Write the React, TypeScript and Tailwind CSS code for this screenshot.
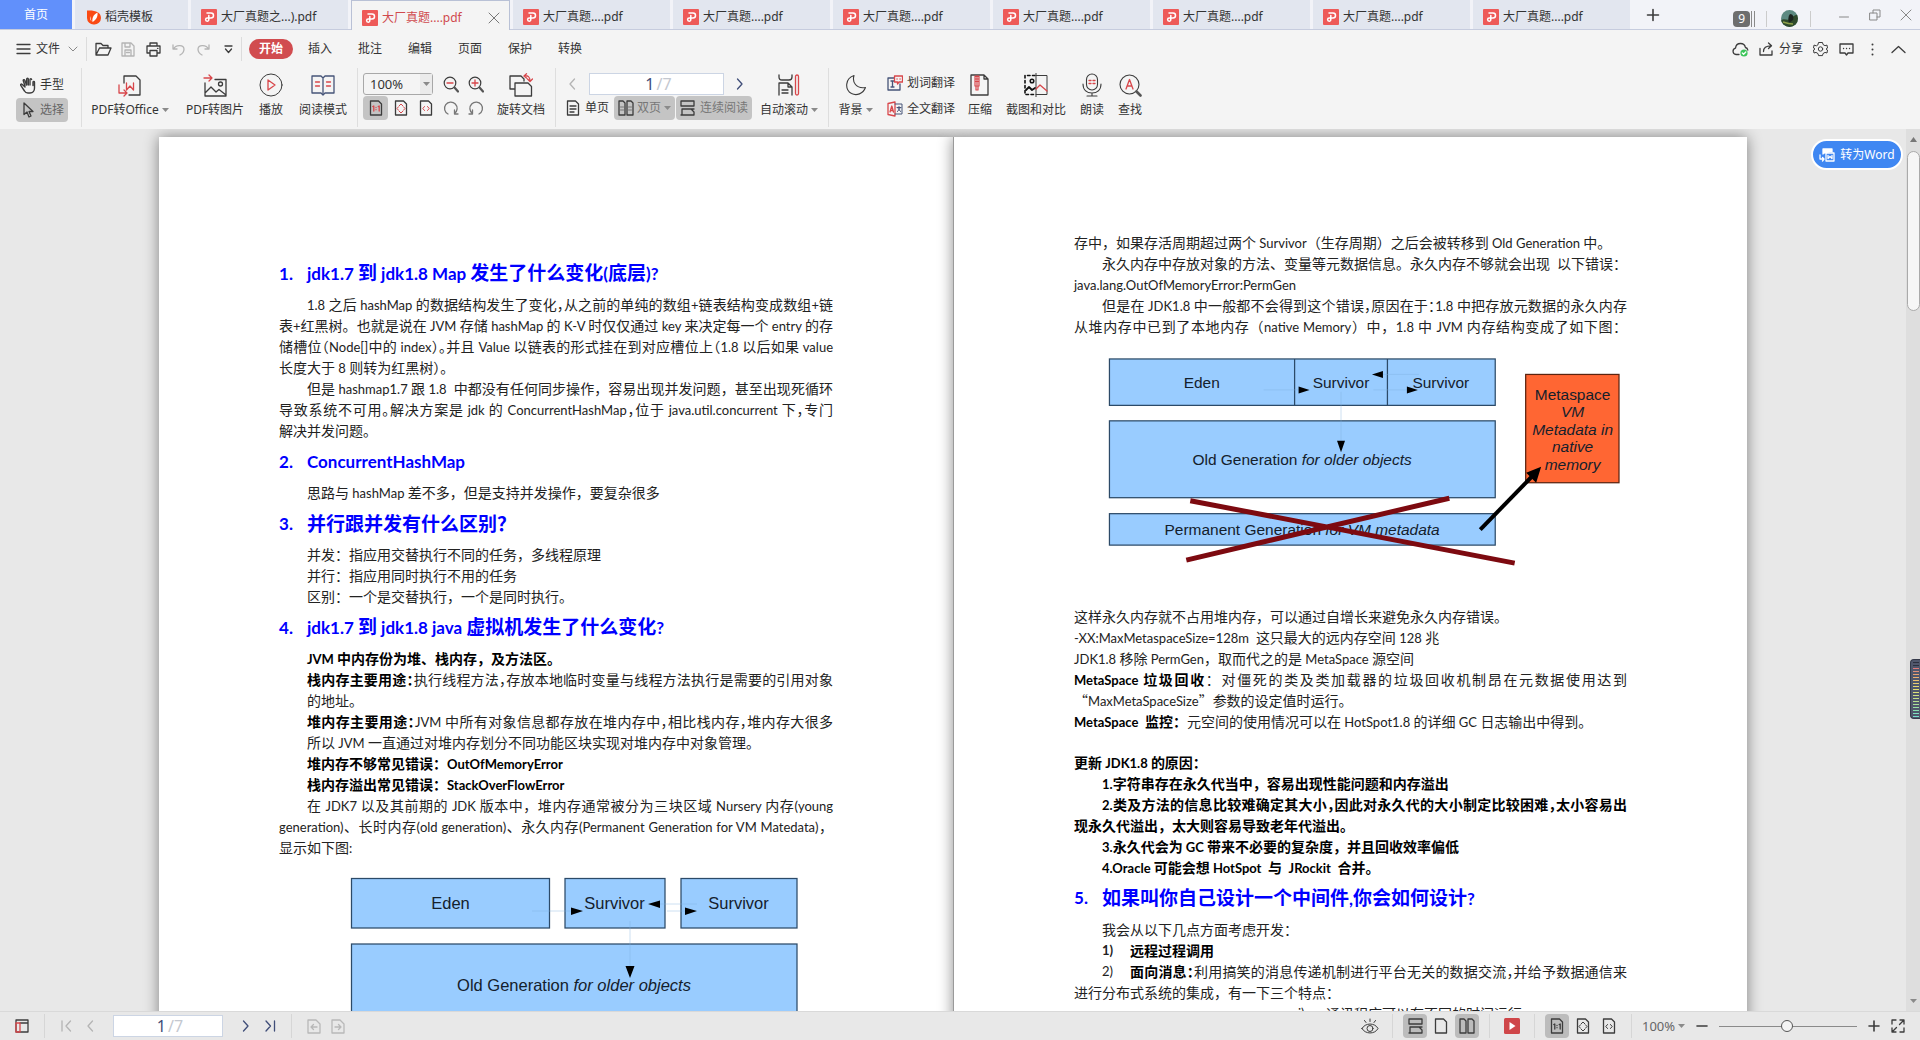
import React from 'react';
import clsx from 'clsx';

type Children = { children?: React.ReactNode };

/* ---------- icons ---------- */

const Icon = ({ w = 16, h = 16, color = '#3c3c3c', children }: Children & { w?: number; h?: number; color?: string }) => (
  <svg
    width={w}
    height={h}
    viewBox={`0 0 ${w} ${h}`}
    fill="none"
    stroke={color}
    strokeWidth="1.3"
    strokeLinecap="round"
    strokeLinejoin="round"
    aria-hidden="true"
    className="shrink-0"
  >
    {children}
  </svg>
);

const RED = '#d8474b';
const MUTED = '#b4b4b4';

const PdfLogo = () => (
  <svg width="16" height="16" viewBox="0 0 16 16" aria-hidden="true" className="shrink-0">
    <rect width="16" height="16" rx="1" fill="#ee5a58" />
    <path
      d="M6 4h4a2 2 0 0 1 0 5H6.2a1.6 1.6 0 1 0 1.6 1.6V6.5"
      fill="none"
      stroke="#fff"
      strokeWidth="1.5"
      strokeLinecap="round"
    />
  </svg>
);

const DocerLogo = () => (
  <svg width="14" height="16" viewBox="0 0 14 16" aria-hidden="true" className="shrink-0">
    <path d="M0 1.5C8 1 14 3 14 9a6.6 6.6 0 0 1-7 6.5A6.6 6.6 0 0 1 0 9z" fill="#fa4a14" />
    <path d="M10.5 3.500C6 6 5 9 5.500 13 9 11 11 8 10.500 3.500zM3 7c-.3 2 .3 4 1.500 5.500" fill="#fff" />
  </svg>
);

const Caret = () => (
  <svg width="7" height="4" viewBox="0 0 7 4" aria-hidden="true" className="shrink-0">
    <path d="M0 0h7L3.500 4z" fill="#8a8a8a" />
  </svg>
);

const ChevronLeft = ({ color = MUTED }) => (
  <Icon w={8} h={14} color={color}>
    <path d="M6.500 2 2 7l4.500 5" />
  </Icon>
);

const ChevronRight = ({ color = '#3f4d78' }) => (
  <Icon w={8} h={14} color={color}>
    <path d="M1.500 2 6 7l-4.500 5" />
  </Icon>
);

const sheet = 'M1.500 1h8l3 3v11h-11z';

const ActualSize = ({ accent = RED }) => (
  <Icon w={14} h={16}>
    <path d={sheet} />
    <path d="M3.800 6.500 4.800 6v5M9.200 6.500l1-.5v5M7 7.500v.1M7 9.600v.1" stroke={accent} />
  </Icon>
);

const FitPage = ({ accent = RED }) => (
  <Icon w={14} h={16}>
    <path d={sheet} />
    <path d="M5 6l2-2 2 2M5 11l2 2 2-2M4.300 7 3 8.500l1.300 1.500M9.700 7 11 8.500 9.700 10" stroke={accent} strokeWidth="1" />
  </Icon>
);

const FitWidth = ({ accent = RED }) => (
  <Icon w={14} h={16}>
    <path d={sheet} />
    <path d="M5.500 6.500 3.800 8.500l1.700 2M8.500 6.500l1.700 2-1.700 2" stroke={accent} strokeWidth="1" />
  </Icon>
);

const TwoPages = () => (
  <Icon w={16} h={16}>
    <path d="M1 1h4l2 2v12H1zM9 1h4l2 2v12H9z" />
    <path d="M2.500 7h3M2.500 10h3M10.500 7h3M10.500 10h3" strokeWidth="1" stroke="#777" />
  </Icon>
);

const Continuous = () => (
  <Icon w={15} h={16}>
    <path d="M1 1h13v5H1zM2 15V9h12M1 15h13v-3l-3-3" />
  </Icon>
);

/* ---------- window chrome ---------- */

const tabs = [
  { name: '大厂真题之...).pdf' },
  { name: '大厂真题....pdf', active: true },
  { name: '大厂真题....pdf' },
  { name: '大厂真题....pdf' },
  { name: '大厂真题....pdf' },
  { name: '大厂真题....pdf' },
  { name: '大厂真题....pdf' },
  { name: '大厂真题....pdf' },
  { name: '大厂真题....pdf' },
];

const TabBar = () => (
  <header className="flex h-[30px] shrink-0 border-b border-[#c6ccde] bg-[#f2f3f8]">
    <button className="w-[72px] bg-[#6190fb] text-white">首页</button>
    <button className="ml-[3px] flex w-[113px] items-center gap-1 bg-[#e2e6ef] pt-1 pl-3">
      <DocerLogo />
      稻壳模板
    </button>
    {tabs.map((tab, i) =>
      tab.active ? (
        <div
          key={i}
          className="-mb-px ml-[3px] flex w-[159px] items-center border border-b-0 border-[#b9c1d6] bg-[#f4f4f4] pt-1 pl-[10px]"
        >
          <button className="flex items-center gap-1 text-[#d04a4e]">
            <PdfLogo />
            {tab.name}
          </button>
          <button aria-label="关闭标签" className="mr-[9px] ml-auto">
            <Icon w={12} h={12} color="#777">
              <path d="M1 1l10 10M11 1 1 11" strokeWidth="1" />
            </Icon>
          </button>
        </div>
      ) : (
        <button key={i} className="ml-[3px] flex w-[157px] items-center gap-1 bg-[#e2e6ef] pt-1 pl-[10px]">
          <PdfLogo />
          {tab.name}
        </button>
      ),
    )}
    <button aria-label="新建标签" className="ml-3 px-1">
      <Icon w={14} h={14}>
        <path d="M7 1.500v11M1.500 7h11" strokeWidth="1.600" />
      </Icon>
    </button>
    <div className="ml-auto flex items-center">
      <div className="flex items-center pt-2">
        <button className="flex h-4 items-center rounded-sm bg-[#6e6e6e] px-[5px] text-white">9</button>
        <span className="ml-px h-4 w-1 border-x border-[#8a8a8a]" />
        <span className="ml-[11px] h-4 w-px bg-[#ccc]" />
        <button aria-label="账户" className="ml-[14px] size-[17px] overflow-hidden rounded-full">
          <svg width="17" height="17" viewBox="0 0 17 17" aria-hidden="true">
            <rect width="17" height="17" fill="#5d8a82" />
            <path d="M0 10c4-2 6 1 9-1s5-5 8-4v12H0z" fill="#2f4a2c" />
            <path d="M9 4c3 0 4 3 3 6l-4 3c-1-3-1-7 1-9z" fill="#1c2420" />
            <path d="M2 12c3 1 6 2 10 2" stroke="#8ea04a" strokeWidth="1.500" fill="none" />
          </svg>
        </button>
        <span className="ml-3 h-4 w-px bg-[#ccc]" />
      </div>
      <button aria-label="最小化" className="ml-[27px]">
        <Icon w={12} h={12} color="#888">
          <path d="M1.500 8h9" strokeWidth="1" />
        </Icon>
      </button>
      <button aria-label="还原" className="ml-[19px]">
        <Icon w={12} h={12} color="#888">
          <path d="M1 4h7v7H1zM4 4V1h7v7H8" strokeWidth="1" />
        </Icon>
      </button>
      <button aria-label="关闭" className="mr-2 ml-[19px]">
        <Icon w={12} h={12} color="#888">
          <path d="M1 1l10 10M11 1 1 11" strokeWidth="1" />
        </Icon>
      </button>
    </div>
  </header>
);

const menus = ['插入', '批注', '编辑', '页面', '保护', '转换'];

const MenuBar = () => (
  <nav className="flex h-[38px] shrink-0 items-center bg-[#f4f4f4] pl-4">
    <button className="flex items-center gap-[5px]">
      <Icon w={15} h={12}>
        <path d="M1 1.500h13M1 6h13M1 10.500h13" />
      </Icon>
      文件
      <span className="ml-[3px]">
        <Icon w={10} h={6} color="#888">
          <path d="M1 1l4 4 4-4" strokeWidth="1" />
        </Icon>
      </span>
    </button>
    <span className="ml-2 h-6 w-px bg-[#dcdcdc]" />
    <button aria-label="打开" className="ml-2">
      <Icon w={17} h={14}>
        <path d="M1 13V1.500h5l2 2h5V6M1 13 4.500 6H16l-3 7z" />
      </Icon>
    </button>
    <button aria-label="保存" className="ml-[9px]">
      <Icon w={14} h={15} color={MUTED}>
        <path d="M1 1h9l3 3v10H1zM4 1v4h5V1M4 14V8h6v6M5.500 10.500h3" />
      </Icon>
    </button>
    <button aria-label="打印" className="ml-[11px]">
      <Icon w={15} h={15}>
        <path d="M4 4V1h7v3M4 11H1V4h13v7h-3M4 8.500h7V14H4zM11.500 6.300h.5" />
      </Icon>
    </button>
    <button aria-label="撤销" className="ml-[11px]">
      <Icon w={13} h={13} color={MUTED}>
        <path d="M1 2v4h4M1.500 6c2-4 10-5 10.500 0 0 3-2 5-4 6" />
      </Icon>
    </button>
    <button aria-label="恢复" className="ml-3">
      <Icon w={13} h={13} color={MUTED}>
        <path d="M12 2v4H8M11.500 6C9.500 2 1.500 1 1 6c0 3 2 5 4 6" />
      </Icon>
    </button>
    <button aria-label="自定义快速访问" className="ml-[14px]">
      <Icon w={9} h={9}>
        <path d="M1 1h7M1.500 4l3 3.500L7.500 4" />
      </Icon>
    </button>
    <span className="ml-2 h-6 w-px bg-[#dcdcdc]" />
    <button className="ml-[7px] h-5 w-11 rounded-full bg-[#d14c4f] font-bold text-white">开始</button>
    <div className="ml-[15px] flex gap-[26px]">
      {menus.map((m) => (
        <button key={m}>{m}</button>
      ))}
    </div>
    <div className="mr-[14px] ml-auto flex items-center">
      <button aria-label="云同步">
        <Icon w={17} h={15}>
          <path d="M7 12.500H4a3.200 3.200 0 0 1-.5-6.300C3.800 3.300 6 1.500 8.500 1.500S13 3.300 13.400 5.500A3 3 0 0 1 15.800 8" />
          <circle cx="12" cy="11" r="3.600" fill="#3cc45a" stroke="none" />
          <path d="M10.300 11l1.300 1.300 2.200-2.300" stroke="#fff" />
        </Icon>
      </button>
      <button className="ml-[10px] flex items-center gap-[5px]">
        <Icon w={15} h={14}>
          <path d="M1 6.500V13h12V9M4.500 9.500C4.500 6 7 3.800 12 3.800M9.500 1 12.500 3.800 9.500 6.600" />
        </Icon>
        分享
      </button>
      <button aria-label="设置" className="ml-[10px]">
        <Icon w={15} h={16}>
          <path
            d="M5 3.500 5.500 1.500h4l.5 2 2 1.200 2-.6.500 3L13 8l1.500 1-.5 3-2-.6-2 1.200-.5 2h-4l-.5-2-2-1.200-2 .6-.5-3L2 8 .5 7 1 4.100l2 .6z"
            strokeWidth="1"
          />
          <circle cx="7.500" cy="8" r="2.200" strokeWidth="1" />
        </Icon>
      </button>
      <button aria-label="反馈" className="ml-[11px]">
        <Icon w={15} h={13}>
          <path d="M1 1h13v9H9l-1.500 2L6 10H1zM4.500 5.500h.1M7.500 5.500h.1M10.500 5.500h.1" />
        </Icon>
      </button>
      <button aria-label="更多" className="ml-[17px]">
        <Icon w={3} h={13}>
          <path d="M1.500 1.500v.1M1.500 6.500v.1M1.500 11.500v.1" strokeWidth="2" />
        </Icon>
      </button>
      <button aria-label="收起功能区" className="ml-[17px]">
        <Icon w={15} h={9}>
          <path d="M1 7.500 7.500 1.500 14 7.500" />
        </Icon>
      </button>
    </div>
  </nav>
);

/* ---------- ribbon ---------- */

const Tool = ({ label, caret, className, children }: Children & { label: string; caret?: boolean; className?: string }) => (
  <button className={clsx('flex shrink-0 flex-col items-center gap-[3px] whitespace-nowrap', className)}>
    <span className="flex h-6 items-center">{children}</span>
    <span className="flex h-5 items-center gap-[3px]">
      {label}
      {caret && <Caret />}
    </span>
  </button>
);

const Divider = ({ className }: { className?: string }) => (
  <span className={clsx('-mt-[5px] h-[59px] w-px shrink-0 bg-[#dedede]', className)} />
);

const SmallTool = ({ label, children }: Children & { label: string }) => (
  <button aria-label={label} className="flex h-6 w-[25px] items-center justify-center">
    {children}
  </button>
);

const Magnifier = ({ plus }: { plus?: boolean }) => (
  <Icon w={16} h={17}>
    <circle cx="7" cy="7" r="5.800" strokeWidth="1.200" />
    <path d="M11.500 11.500l3.500 4" strokeWidth="2.200" stroke="#555" />
    <path d={plus ? 'M4 7h6M7 4v6' : 'M4 7h6'} stroke={RED} />
  </Icon>
);

const PageBox = ({ className }: { className?: string }) => (
  <label
    className={clsx('flex h-[22px] items-center border border-[#ccd5e4] bg-white text-base leading-5', className)}
  >
    <input aria-label="页码" defaultValue="1" className="w-1/2 bg-transparent pr-0.5 text-right text-[#3f4d78] outline-none" />
    <span className="w-1/2 text-[#c4c8d0]">/7</span>
  </label>
);

const Ribbon = () => (
  <section className="flex h-[61px] shrink-0 items-start bg-[#f4f4f4] pt-[5px] pl-4">
    <div className="flex w-[52px] shrink-0 flex-col gap-px">
      <button className="flex h-6 items-center gap-1 pl-1">
        <Icon w={16} h={17}>
          <path
            d="M5 10 2 7.300c-.8-.8-1.700.2-1.200 1L4.500 14c.6 1.200 1.700 2 3.500 2h2c3 0 4.500-2 4.500-5V5.200c0-1-1.500-1-1.500 0v3.300M5 9 3.300 3.700c-.3-1 1-1.500 1.500-.5L6.500 8M6.700 8V2c0-1.100 1.600-1.100 1.600 0v6M10 8V2.500c0-1.100 1.600-1.100 1.600 0"
            strokeWidth="1.400"
          />
        </Icon>
        <span className="whitespace-nowrap">手型</span>
      </button>
      <button className="flex h-6 items-center gap-1.5 rounded bg-[#c4c4c4] pl-[7px] text-[#666]">
        <Icon w={11} h={16}>
          <path d="M1 1v11.500l3-2.500 2 5 2-1-2-4.500h4z" />
        </Icon>
        <span className="whitespace-nowrap">选择</span>
      </button>
    </div>
    <Divider className="ml-[13px]" />
    <Tool label="PDF转Office" caret className="ml-[9px] w-[78px]">
      <Icon w={24} h={23}>
        <path d="M6 9V2h12l4 4v15H11" />
        <path d="M8.500 9v7l3.500-4 3.500 4V9M1 11v8h8M6 16l3 3-3 3" stroke={RED} />
      </Icon>
    </Tool>
    <Tool label="PDF转图片" className="ml-4 w-[60px]">
      <Icon w={24} h={23}>
        <path d="M2 9v13h21V5.500H12M2 19l6-6 5 5 3-2.500 7 5.500" />
        <circle cx="17.500" cy="10" r="2" />
        <path d="M1 4h8M6 1l3 3-3 3" stroke={RED} />
      </Icon>
    </Tool>
    <Tool label="播放" className="ml-[14px] w-6">
      <Icon w={24} h={24}>
        <circle cx="12" cy="12" r="11" strokeWidth="1" />
        <path d="M9 7v10l7-5z" stroke={RED} />
      </Icon>
    </Tool>
    <Tool label="阅读模式" className="ml-4 w-12">
      <Icon w={24} h={22} color="#465478">
        <path d="M12 4v15M12 4l-2-2H1v17h9l2 2 2-2h9V2h-9z" />
        <path d="M4.500 8h4M4.500 12h4M15.500 8h4M15.500 12h4" stroke={RED} />
      </Icon>
    </Tool>
    <Divider className="ml-[10px]" />
    <div className="ml-[5px] flex shrink-0 flex-col">
      <div className="flex h-[22px] items-center">
        <span className="relative mr-[5px] flex">
          <select
            aria-label="缩放比例"
            defaultValue="100%"
            className="h-[22px] w-[70px] appearance-none rounded-[3px] border border-[#a8a8a8] bg-[#f4f4f4] pl-1.5 text-[13px]"
          >
            <option>100%</option>
            <option>150%</option>
          </select>
          <span className="pointer-events-none absolute inset-y-px right-px flex w-3 items-center justify-center bg-[#ebebeb]">
            <Caret />
          </span>
        </span>
        <SmallTool label="缩小">
          <Magnifier />
        </SmallTool>
        <SmallTool label="放大">
          <Magnifier plus />
        </SmallTool>
      </div>
      <div className="mt-px flex">
        <span className="flex rounded bg-[#c4c4c4]">
          <SmallTool label="实际大小">
            <ActualSize />
          </SmallTool>
        </span>
        <SmallTool label="适合页面">
          <FitPage />
        </SmallTool>
        <SmallTool label="适合宽度">
          <FitWidth />
        </SmallTool>
        <SmallTool label="向左旋转">
          <Icon w={16} h={16} color="#777">
            <path d="M5 14A6.300 6.300 0 1 1 11.500 13.500M11.500 10v4h3.500" />
          </Icon>
        </SmallTool>
        <SmallTool label="向右旋转">
          <Icon w={16} h={16} color="#777">
            <path d="M11 14A6.300 6.300 0 1 0 4.500 13.500M4.500 10v4H1" />
          </Icon>
        </SmallTool>
      </div>
    </div>
    <Tool label="旋转文档" className="ml-[9px] w-12">
      <Icon w={24} h={24}>
        <path d="M5 16H1V3h11l3 3v2M6 10h13l3.500 3.500V23H6z" />
        <path d="M15 3c4-1 6 1 6 5M17.500.8 15 3l2.500 2M18.500 6 21 8.500 23.500 6" stroke={RED} />
      </Icon>
    </Tool>
    <Divider className="ml-[10px]" />
    <div className="ml-1 flex w-[192px] shrink-0 flex-col gap-px">
      <div className="flex h-[22px] items-center">
        <button aria-label="上一页" className="mr-[5px] flex w-6 justify-center">
          <ChevronLeft />
        </button>
        <PageBox className="flex-1" />
        <button aria-label="下一页" className="ml-1 flex w-6 justify-center">
          <ChevronRight />
        </button>
      </div>
      <div className="flex h-6 whitespace-nowrap">
        <button className="flex w-[54px] items-center gap-[5px] pl-1.5">
          <Icon w={14} h={16}>
            <path d={sheet} />
            <path d="M4 6h6M4 9h6M4 12h4" />
          </Icon>
          单页
        </button>
        <button className="flex w-[61px] items-center gap-[3px] rounded bg-[#c4c4c4] pl-1 text-[#777]">
          <TwoPages />
          双页
          <Caret />
        </button>
        <button className="ml-px flex w-[76px] items-center gap-[5px] rounded bg-[#c4c4c4] pl-1 text-[#777]">
          <Continuous />
          连续阅读
        </button>
      </div>
    </div>
    <Tool label="自动滚动" caret className="ml-[8px] w-[58px]">
      <Icon w={24} h={22}>
        <path d="M2 1v2c0 2 1 3 3 3h7c2 0 3-1 3-3V1M2 21V9h9l4 4v8M11 9v4h4M5 16h6M5 19h6" />
        <rect x="18.500" y="1" width="3" height="20" rx="1.500" stroke={RED} />
      </Icon>
    </Tool>
    <Divider className="ml-[10px]" />
    <Tool label="背景" caret className="ml-[9px] w-[35px]">
      <Icon w={22} h={22}>
        <path d="M9 1.500C7 8 11 15 20.500 13.500 18 20 11.500 22 6.500 19.500-.5 15.500 0 4.500 9 1.500z" strokeWidth="1.100" />
      </Icon>
    </Tool>
    <div className="ml-[14px] flex w-[68px] shrink-0 flex-col gap-1.5 whitespace-nowrap">
      <button className="flex h-5 items-center gap-1">
        <Icon w={16} h={16} color="#465478">
          <path d="M7 3H1v12h12V9M4 6h3M5.500 6v6M4 12h3" />
          <path d="M7.500 1h8v6H12l-1.500 2V7h-3zM10 4h.1M13 4h.1" stroke={RED} />
        </Icon>
        划词翻译
      </button>
      <button className="flex h-5 items-center gap-1">
        <Icon w={16} h={16} color="#465478">
          <path d="M1 2.500 8 1v14l-7-1.500zM3 11l1.800-6L6.500 11M3.500 9.500h2.500" stroke={RED} />
          <path d="M8 3h7v10H8M10 6.500h4M12 5.500v1M10.500 10.500l3-4M13.500 10.500l-3-4" strokeWidth="1" />
        </Icon>
        全文翻译
      </button>
    </div>
    <Tool label="压缩" className="ml-[13px] w-6">
      <Icon w={20} h={22}>
        <path d="M1 1h13l4 4v16H1zM14 1v4h4" />
        <path d="M5 2.500h4M5 5h4M5 7.500h4M5 2v10h1v4h2v-4h1V2zM7 2v10" stroke={RED} strokeWidth="1.200" />
      </Icon>
    </Tool>
    <Tool label="截图和对比" className="ml-[14px] w-[60px]">
      <Icon w={24} h={24}>
        <path d="M11 2.500H1v19h10" strokeDasharray="2.500 2.500" strokeWidth="1.600" stroke="#111" />
        <path d="M12 2.500h11v19H12M12 0v24" strokeWidth="1" />
        <path d="M2 17l3-3 3 3 3-2" strokeWidth="1.800" stroke="#111" />
        <circle cx="8" cy="8" r="1.800" stroke="#111" strokeWidth="1.500" />
        <path d="M12 16l4-4 7 6" stroke={RED} />
      </Icon>
    </Tool>
    <Tool label="朗读" className="ml-[14px] w-6">
      <Icon w={20} h={24}>
        <rect x="4.500" y="1" width="11" height="16" rx="5.500" strokeWidth="1.100" />
        <path d="M1 11c0 6 4 9 9 9s9-3 9-9M10 20v3M5 23h10" strokeWidth="1.100" />
        <path d="M7 7.500h2M11 7.500h2M7 10.500h2M11 10.500h2" stroke={RED} />
      </Icon>
    </Tool>
    <Tool label="查找" className="ml-[14px] w-6">
      <Icon w={23} h={23}>
        <circle cx="10.500" cy="10.500" r="9.500" strokeWidth="1.100" />
        <path d="M17.500 17.500l4 4" strokeWidth="2.600" stroke="#555" />
        <path d="M7 15l3.500-9.500L14 15M8.200 12h4.600" stroke={RED} />
      </Icon>
    </Tool>
  </section>
);

/* ---------- document ---------- */

// Latin runs are set one pixel smaller than the Chinese glyphs around them,
// curly quotes take their full-width form.
const mixed = (text: string, latin: string) =>
  text.split(/([\x20-\x7e]+|[“”])/).map((part, i) =>
    i % 2 ? (
      <span key={i} className={/[“”]/.test(part) ? "font-['Noto_Sans_CJK_SC']" : latin}>
        {part}
      </span>
    ) : (
      part
    ),
  );

type LineProps = { text: string; lead?: string; indent?: boolean; justify?: boolean; tight?: boolean; bold?: boolean };

const Line = ({ text, lead, indent, justify, tight, bold }: LineProps) => (
  <p
    className={clsx(
      'h-[21px] whitespace-nowrap text-[14px] leading-[21px]',
      indent && 'pl-7',
      (justify || tight) && '[text-align-last:justify]',
      // half-width punctuation, for lines that would run past the margin
      tight && "[font-feature-settings:'halt']",
      bold && 'font-bold text-black',
    )}
  >
    {lead && <b className="text-black">{mixed(lead, 'text-[13px]')}</b>}
    {mixed(text, 'text-[13px]')}
  </p>
);

const Heading = ({ no, text }: { no: string; text: string }) => (
  <h2 className="flex h-[41px] items-center text-[19px] leading-6 font-bold whitespace-nowrap text-[#0000ff]">
    <span className="w-7 text-[17px]">{no}.</span>
    <span>{mixed(text, 'text-[17px]')}</span>
  </h2>
);

const box = { fill: '#99ccff', stroke: '#2c4a68', strokeWidth: 2.5 };

const HeapDiagram = () => (
  <svg
    viewBox="0 0 1108 400"
    className="mt-[10px] w-full"
    fontFamily="'Liberation Sans', sans-serif"
    fontSize="33"
    textAnchor="middle"
    fill="#14202c"
  >
    <rect x="145" y="21" width="396" height="99" {...box} />
    <rect x="572" y="21" width="200" height="99" {...box} />
    <rect x="804" y="21" width="232" height="99" {...box} />
    <rect x="145" y="152" width="891" height="220" {...box} />
    <path d="M506 86h78M760 72h76M776 86h36M702 106v90" stroke="#7fb0e0" strokeWidth="1.500" opacity="0.5" />
    <path d="M584 79v15l24-8zM762 65v15l-24-8zM812 79v15l24-8zM693 196h18l-9 24z" fill="#000" />
    <text x="343" y="82">Eden</text>
    <text x="671" y="82">Survivor</text>
    <text x="919" y="82">Survivor</text>
    <text x="590" y="246">
      Old Generation <tspan fontStyle="italic">for older objects</tspan>
    </text>
  </svg>
);

const MetaspaceDiagram = () => (
  <svg
    viewBox="0 0 1108 538"
    className="w-full"
    fontFamily="'Liberation Sans', sans-serif"
    fontSize="31"
    textAnchor="middle"
    fill="#14202c"
  >
    <rect x="71" y="44" width="773" height="93" {...box} />
    <path d="M442 44v93M628 44v93" stroke="#2c4a68" strokeWidth="2.500" />
    <rect x="71" y="168" width="773" height="154" {...box} />
    <rect x="71" y="354" width="773" height="63" {...box} />
    <rect x="905" y="75" width="187" height="217" fill="#ff6633" stroke="#5c2410" strokeWidth="2.500" />
    <path d="M380 106h70M619 75h72M600 106h67M535 110v98" stroke="#7fb0e0" strokeWidth="1.500" opacity="0.5" />
    <path d="M450 99v14l22-7zM619 68v14l-22-7zM667 99v14l22-7zM527 208h16l-8 23z" fill="#000" />
    <text x="256" y="102">Eden</text>
    <text x="535" y="102">Survivor</text>
    <text x="735" y="102">Survivor</text>
    <text x="457" y="256">
      Old Generation <tspan fontStyle="italic">for older objects</tspan>
    </text>
    <text x="457" y="396">
      Permanent Generation <tspan fontStyle="italic">for VM metadata</tspan>
    </text>
    <text x="999" y="126">Metaspace</text>
    <g fontStyle="italic">
      <text x="999" y="160">VM</text>
      <text x="999" y="196">Metadata in</text>
      <text x="999" y="230">native</text>
      <text x="999" y="266">memory</text>
    </g>
    <path d="M233 328 883 453M225 447 752 323" stroke="#7d0a10" strokeWidth="10" />
    <path d="M814 386 920 277" stroke="#000" strokeWidth="8" />
    <path d="M936 260l-10 32-20-20z" fill="#000" />
  </svg>
);

const Sheet = ({ className, children }: Children & { className?: string }) => (
  <article
    className={clsx(
      'h-[1123px] w-[794px] shrink-0 bg-white px-[120px] text-[#222] shadow-[0_0_14px_rgba(0,0,0,0.45)]',
      "font-['Lato','Noto_Sans_CJK_SC',sans-serif]",
      className,
    )}
  >
    {children}
  </article>
);

const PageOne = () => (
  <Sheet className="pt-[116px]">
    <Heading no="1" text="jdk1.7 到 jdk1.8 Map 发生了什么变化(底层)?" />
    <Line indent tight text="1.8 之后 hashMap 的数据结构发生了变化，从之前的单纯的数组+链表结构变成数组+链" />
    <Line justify text="表+红黑树。也就是说在 JVM 存储 hashMap 的 K-V 时仅仅通过 key 来决定每一个 entry 的存" />
    <Line tight text="储槽位（Node[]中的 index）。并且 Value 以链表的形式挂在到对应槽位上（1.8 以后如果 value" />
    <Line text="长度大于 8 则转为红黑树）。" />
    <Line indent justify text={'但是 hashmap1.7 跟 1.8\u00a0 中都没有任何同步操作，容易出现并发问题，甚至出现死循环'} />
    <Line tight text="导致系统不可用。解决方案是 jdk 的 ConcurrentHashMap，位于 java.util.concurrent 下，专门" />
    <Line text="解决并发问题。" />
    <Heading no="2" text="ConcurrentHashMap" />
    <Line indent text="思路与 hashMap 差不多，但是支持并发操作，要复杂很多" />
    <Heading no="3" text="并行跟并发有什么区别？" />
    <Line indent text="并发：指应用交替执行不同的任务，多线程原理" />
    <Line indent text="并行：指应用同时执行不用的任务" />
    <Line indent text="区别：一个是交替执行，一个是同时执行。" />
    <Heading no="4" text="jdk1.7 到 jdk1.8 java 虚拟机发生了什么变化?" />
    <Line indent bold text="JVM 中内存份为堆、栈内存，及方法区。" />
    <Line indent tight lead="栈内存主要用途：" text="执行线程方法，存放本地临时变量与线程方法执行是需要的引用对象" />
    <Line indent text="的地址。" />
    <Line indent tight lead="堆内存主要用途：" text="JVM 中所有对象信息都存放在堆内存中，相比栈内存，堆内存大很多" />
    <Line indent text="所以 JVM 一直通过对堆内存划分不同功能区块实现对堆内存中对象管理。" />
    <Line indent bold text="堆内存不够常见错误：OutOfMemoryError" />
    <Line indent bold text="栈内存溢出常见错误：StackOverFlowError" />
    <Line indent justify text="在 JDK7 以及其前期的 JDK 版本中，堆内存通常被分为三块区域 Nursery 内存(young" />
    <Line justify text="generation)、长时内存(old generation)、永久内存(Permanent Generation for VM Matedata)，" />
    <Line text="显示如下图:" />
    <HeapDiagram />
  </Sheet>
);

const PageTwo = () => (
  <Sheet className="border-l border-[#9a9a9a] pt-[95px]">
    <Line text="存中，如果存活周期超过两个 Survivor（生存周期）之后会被转移到 Old Generation 中。" />
    <Line indent justify text={'永久内存中存放对象的方法、变量等元数据信息。永久内存不够就会出现\u00a0 以下错误：'} />
    <Line text="java.lang.OutOfMemoryError:PermGen" />
    <Line indent tight text="但是在 JDK1.8 中一般都不会得到这个错误，原因在于：1.8 中把存放元数据的永久内存" />
    <Line justify text="从堆内存中已到了本地内存（native Memory）中，1.8 中 JVM 内存结构变成了如下图：" />
    <MetaspaceDiagram />
    <Line text="这样永久内存就不占用堆内存，可以通过自增长来避免永久内存错误。" />
    <Line text={'-XX:MaxMetaspaceSize=128m\u00a0 这只最大的远内存空间 128 兆'} />
    <Line text="JDK1.8 移除 PermGen，取而代之的是 MetaSpace 源空间" />
    <Line justify lead="MetaSpace 垃圾回收" text="：对僵死的类及类加载器的垃圾回收机制昂在元数据使用达到" />
    <Line text="“MaxMetaSpaceSize”参数的设定值时运行。" />
    <Line lead={'MetaSpace\u00a0 监控：'} text="元空间的使用情况可以在 HotSpot1.8 的详细 GC 日志输出中得到。" />
    <div className="h-5" />
    <Line bold text="更新 JDK1.8 的原因：" />
    <Line indent bold text="1.字符串存在永久代当中，容易出现性能问题和内存溢出" />
    <Line indent bold tight text="2.类及方法的信息比较难确定其大小，因此对永久代的大小制定比较困难，太小容易出" />
    <Line bold text="现永久代溢出，太大则容易导致老年代溢出。" />
    <Line indent bold text="3.永久代会为 GC 带来不必要的复杂度，并且回收效率偏低" />
    <Line indent bold text={'4.Oracle 可能会想 HotSpot\u00a0 与\u00a0 JRockit\u00a0 合并。'} />
    <Heading no="5" text="如果叫你自己设计一个中间件,你会如何设计?" />
    <Line indent text="我会从以下几点方面考虑开发：" />
    <div className="flex pl-7">
      <span className="w-7 shrink-0 text-[13px] leading-[21px] font-bold">1)</span>
      <Line bold text="远程过程调用" />
    </div>
    <div className="flex pl-7">
      <span className="w-7 shrink-0 text-[13px] leading-[21px]">2)</span>
      <div className="min-w-0 flex-1">
        <Line tight lead="面向消息：" text="利用搞笑的消息传递机制进行平台无关的数据交流，并给予数据通信来" />
      </div>
    </div>
    <Line text="进行分布式系统的集成，有一下三个特点：" />
    <div className="flex pl-56">
      <span className="w-7 shrink-0 text-[13px] leading-[21px]">i)</span>
      <Line text="通讯程序可以在不同的时间运行" />
    </div>
  </Sheet>
);

const meter = [
  'bg-[#2c3040]', 'bg-[#2c3040]', 'bg-[#e07a7a]', 'bg-[#e0907a]', 'bg-[#e8a070]', 'bg-[#ecb070]', 'bg-[#ecc070]',
  'bg-[#e8cc70]', 'bg-[#e8d870]', 'bg-[#e4e070]', 'bg-[#dce078]', 'bg-[#d0e080]', 'bg-[#c4e088]', 'bg-[#b8e090]',
  'bg-[#a8e098]', 'bg-[#98e0a4]', 'bg-[#88e0b0]', 'bg-[#80e0c0]', 'bg-[#78e0cc]',
];

const Viewer = () => (
  <main className="relative flex min-h-0 flex-1 bg-[#e8e8e8]">
    <div className="flex flex-1 justify-center overflow-hidden pt-2">
      <PageOne />
      <PageTwo />
    </div>
    <div className="flex w-[14px] shrink-0 flex-col items-center bg-[#dedede] pt-2">
      <svg width="7" height="5" viewBox="0 0 7 5" aria-hidden="true">
        <path d="M0 5h7L3.500 0z" fill="#777" />
      </svg>
      <span className="mt-[9px] h-[160px] w-[13px] rounded-full border border-[#aaa] bg-[#f6f6f6]" />
      <span className="mt-auto mb-2">
        <Caret />
      </span>
    </div>
    <button className="absolute top-[10px] right-[17px] flex h-[31px] w-[92px] items-center justify-center gap-[5px] rounded-full border-2 border-white bg-[#3f87f2] text-white">
      <Icon w={16} h={14} color="#fff">
        <path d="M4 6V1h9v3" fill="#fff" />
        <path d="M1 7v4h4M3.500 9.500 5 11l-1.500 2M7 5h8v8H7zM9 7.500v3l2-2 2 2v-3" />
      </Icon>
      转为Word
    </button>
    <div className="absolute top-[530px] right-0 flex h-[60px] w-[10px] flex-col items-center justify-center gap-px rounded-l border border-r-0 border-[#353a4a] bg-[#50576c]">
      {meter.map((c, i) => (
        <span key={i} className={clsx('h-px w-1.5', i > 0 && 'mt-px', c)} />
      ))}
    </div>
  </main>
);

/* ---------- status bar ---------- */

const StatusButton = ({ label, on, className, children }: Children & { label: string; on?: boolean; className?: string }) => (
  <button
    aria-label={label}
    className={clsx('flex h-6 w-6 shrink-0 items-center justify-center rounded', on && 'bg-[#bcbcbc]', className)}
  >
    {children}
  </button>
);

const StatusDivider = ({ className }: { className?: string }) => (
  <span className={clsx('h-6 w-px shrink-0 bg-[#d6d6d6]', className)} />
);

const StatusBar = () => (
  <footer className="flex h-[29px] shrink-0 items-center border-t border-[#d9d9d9] bg-[#e8e8e8] pl-[10px]">
    <StatusButton label="导航窗格">
      <Icon w={14} h={14}>
        <path d="M1 1h12v12H1zM5 4h8" />
        <path d="M1 4h4v9H1z" stroke={RED} />
      </Icon>
    </StatusButton>
    <StatusDivider className="ml-[10px]" />
    <StatusButton label="第一页" className="ml-[9px]">
      <Icon w={12} h={14} color={MUTED}>
        <path d="M2 2v10M10.500 2 6 7l4.500 5" />
      </Icon>
    </StatusButton>
    <StatusButton label="上一页">
      <ChevronLeft />
    </StatusButton>
    <PageBox className="ml-[11px] w-[110px]" />
    <StatusButton label="下一页" className="ml-[11px]">
      <ChevronRight />
    </StatusButton>
    <StatusButton label="最后一页">
      <Icon w={12} h={14} color="#3f4d78">
        <path d="M10.500 2v10M2 2l4.500 5L2 12" />
      </Icon>
    </StatusButton>
    <StatusDivider className="ml-[9px]" />
    <StatusButton label="后退" className="ml-[10px]">
      <Icon w={14} h={15} color="#b8b8b8">
        <path d="M1 1h8l4 4v9H1zM4 8h6M6.500 5.500 4 8l2.500 2.500" />
      </Icon>
    </StatusButton>
    <StatusButton label="前进">
      <Icon w={14} h={15} color="#b8b8b8">
        <path d="M1 1h8l4 4v9H1zM4 8h6M7.500 5.500 10 8l-2.500 2.500" />
      </Icon>
    </StatusButton>

    <StatusButton label="护眼模式" className="ml-auto">
      <Icon w={18} h={16}>
        <path
          d="M1 10.500C4 4.500 14 4.500 17 10.500 14 16.500 4 16.500 1 10.500zM9 1v2.500M3.500 2.500l1.500 2M14.500 2.500l-1.500 2"
          strokeWidth="1"
        />
        <circle cx="9" cy="10.500" r="3" strokeWidth="1" />
      </Icon>
    </StatusButton>
    <StatusDivider className="ml-[10px]" />
    <StatusButton label="连续阅读" on className="ml-[10px]">
      <Continuous />
    </StatusButton>
    <StatusButton label="单页" className="ml-0.5">
      <Icon w={14} h={16}>
        <path d={sheet} />
      </Icon>
    </StatusButton>
    <StatusButton label="双页" on className="ml-0.5">
      <Icon w={16} h={16}>
        <path d="M1 1h4l2 2v12H1zM9 1h4l2 2v12H9z" />
      </Icon>
    </StatusButton>
    <StatusDivider className="ml-[10px]" />
    <StatusButton label="播放" className="ml-[10px]">
      <svg width="16" height="16" viewBox="0 0 16 16" aria-hidden="true">
        <rect width="16" height="16" rx="1.500" fill="#cf4649" />
        <path d="M5.500 4v8l6-4z" fill="#fff" />
      </svg>
    </StatusButton>
    <StatusDivider className="ml-[10px]" />
    <StatusButton label="实际大小" on className="ml-[10px]">
      <ActualSize accent="#3c3c3c" />
    </StatusButton>
    <StatusButton label="适合页面" className="ml-0.5">
      <FitPage accent="#3c3c3c" />
    </StatusButton>
    <StatusButton label="适合宽度" className="ml-0.5">
      <FitWidth accent="#3c3c3c" />
    </StatusButton>
    <StatusDivider className="ml-[10px]" />
    <button className="ml-[10px] flex w-[48px] items-center gap-[3px] text-[13px] text-[#666]">
      100%
      <Caret />
    </button>
    <StatusButton label="缩小">
      <Icon w={12} h={12}>
        <path d="M1 6h10" strokeWidth="1.600" />
      </Icon>
    </StatusButton>
    <input
      type="range"
      aria-label="缩放"
      defaultValue="49"
      className="mx-[5px] h-3 w-[138px] appearance-none bg-[linear-gradient(#8a8a8a,#8a8a8a)] bg-[length:100%_1px] bg-center bg-no-repeat [&::-webkit-slider-thumb]:size-3 [&::-webkit-slider-thumb]:appearance-none [&::-webkit-slider-thumb]:rounded-full [&::-webkit-slider-thumb]:border [&::-webkit-slider-thumb]:border-[#555] [&::-webkit-slider-thumb]:bg-[#f4f4f4]"
    />
    <StatusButton label="放大">
      <Icon w={12} h={12}>
        <path d="M1 6h10M6 1v10" strokeWidth="1.600" />
      </Icon>
    </StatusButton>
    <StatusButton label="全屏" className="mr-[10px]">
      <Icon w={14} h={14}>
        <path d="M1 5V1h4M9 1h4v4M13 9v4H9M5 13H1V9M12.500 1.500l-4 4M1.500 12.500l4-4" />
      </Icon>
    </StatusButton>
  </footer>
);

const App = () => (
  <div className="flex h-screen flex-col overflow-hidden font-['Noto_Sans','Noto_Sans_CJK_SC',sans-serif] text-[12px] leading-4 text-[#333]">
    <TabBar />
    <MenuBar />
    <Ribbon />
    <Viewer />
    <StatusBar />
  </div>
);

export default App;
